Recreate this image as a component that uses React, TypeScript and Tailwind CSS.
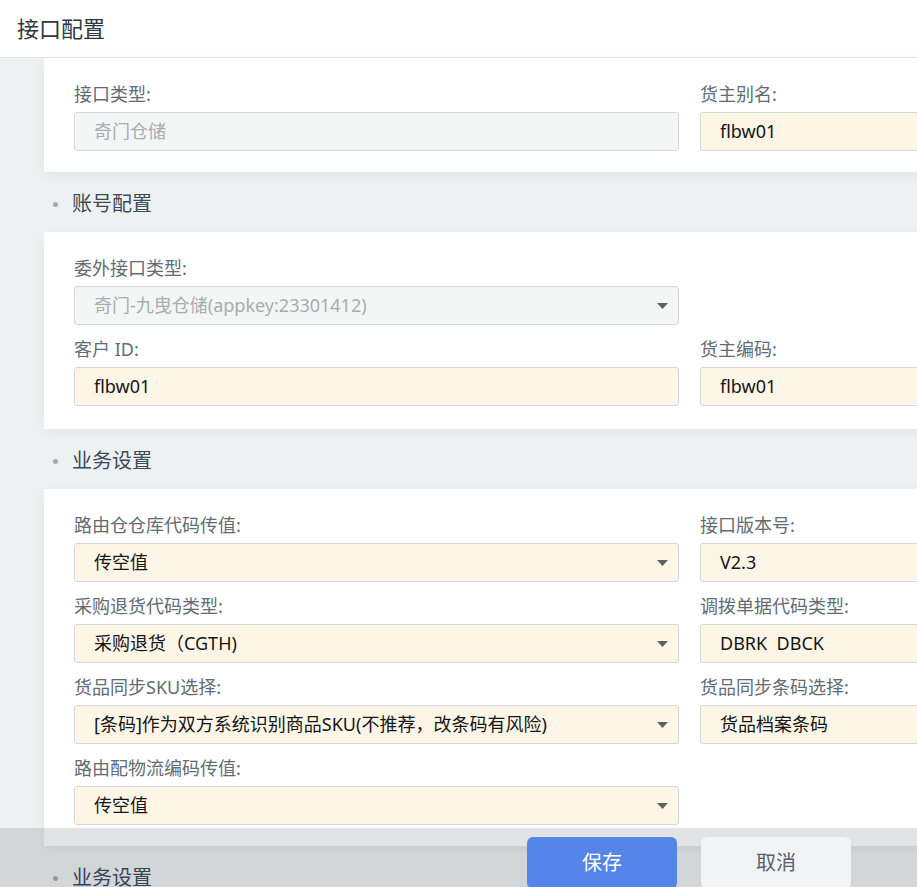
import React from 'react';

type Field = {
  label: string;
  value: string;
  select?: boolean;
  disabled?: boolean;
};

function Arrow() {
  return (
    <svg width="11" height="6" viewBox="0 0 11 6" className="shrink-0">
      <polygon points="0,0 11,0 5.5,6" fill="#5a6368" />
    </svg>
  );
}

function FormField({ f }: { f: Field }) {
  return (
    <div className="flex flex-col">
      <div className="h-[20px] leading-[20px] text-[18px] text-[#626c72] mb-[8px] whitespace-nowrap">{f.label}</div>
      <div
        className={`h-[39px] rounded-[3px] border border-[#cfd9dd] flex items-center justify-between pl-[19px] pr-[10px] text-[18px] whitespace-pre ${
          f.disabled ? 'bg-[#f4f6f6] text-[#a5adb1]' : 'bg-[#fdf6e7] text-[#151515]'
        }`}
      >
        <span>{f.value}</span>
        {f.select && <Arrow />}
      </div>
    </div>
  );
}

function Card({ rows, tall }: { rows: (Field | null)[][]; tall?: boolean }) {
  return (
    <div
      className={`bg-white shadow-[0_3px_10px_rgba(0,0,0,0.05)] pl-[30px] pt-[26px] ${tall ? 'pb-[23px]' : 'pb-[21px]'}`}
    >
      <div className="grid grid-cols-[605px_605px] gap-x-[21px] gap-y-[14px]">
        {rows.flatMap((row, i) =>
          row.map((f, j) => (f ? <FormField key={`${i}-${j}`} f={f} /> : <div key={`${i}-${j}`} />))
        )}
      </div>
    </div>
  );
}

function SectionTitle({ title }: { title: string }) {
  return (
    <div className="h-[60px] pt-[4px] flex items-center">
      <span className="ml-[9px] w-[5px] h-[5px] rounded-full bg-[#a3abb0]" />
      <span className="ml-[14px] text-[20px] text-[#3c4958]">{title}</span>
    </div>
  );
}

export default function App() {
  return (
    <div className="relative w-[917px] h-[887px] overflow-hidden bg-[#eef1f2] font-['Noto_Sans','Noto_Sans_CJK_SC',sans-serif]">
      {/* Header */}
      <div className="h-[58px] bg-white border-b border-[#e2e6e8] flex items-center pl-[17px]">
        <span className="text-[22px] text-[#30373c]">接口配置</span>
      </div>

      <div className="pl-[44px]">
        <div className="w-[1300px]">
          <Card
            rows={[
              [
                { label: '接口类型:', value: '奇门仓储', disabled: true },
                { label: '货主别名:', value: 'flbw01' },
              ],
            ]}
          />
          <SectionTitle title="账号配置" />
          <Card
            tall
            rows={[
              [{ label: '委外接口类型:', value: '奇门-九曳仓储(appkey:23301412)', disabled: true, select: true }, null],
              [
                { label: '客户 ID:', value: 'flbw01' },
                { label: '货主编码:', value: 'flbw01' },
              ],
            ]}
          />
          <SectionTitle title="业务设置" />
          <Card
            rows={[
              [
                { label: '路由仓仓库代码传值:', value: '传空值', select: true },
                { label: '接口版本号:', value: 'V2.3' },
              ],
              [
                { label: '采购退货代码类型:', value: '采购退货（CGTH)', select: true },
                { label: '调拨单据代码类型:', value: 'DBRK  DBCK' },
              ],
              [
                { label: '货品同步SKU选择:', value: '[条码]作为双方系统识别商品SKU(不推荐，改条码有风险)', select: true },
                { label: '货品同步条码选择:', value: '货品档案条码' },
              ],
              [{ label: '路由配物流编码传值:', value: '传空值', select: true }, null],
            ]}
          />
          <SectionTitle title="业务设置" />
        </div>
      </div>

      {/* Footer action bar */}
      <div className="absolute left-0 right-0 bottom-0 h-[59px] bg-[rgba(20,35,45,0.13)] flex items-start pl-[527px] pt-[9px] gap-[24px]">
        <button className="w-[150px] h-[52px] rounded-[6px] bg-[#5585e8] text-white text-[20px]">保存</button>
        <button className="w-[150px] h-[52px] rounded-[6px] bg-[#f1f3f5] text-[#5a6166] text-[20px]">取消</button>
      </div>
    </div>
  );
}
